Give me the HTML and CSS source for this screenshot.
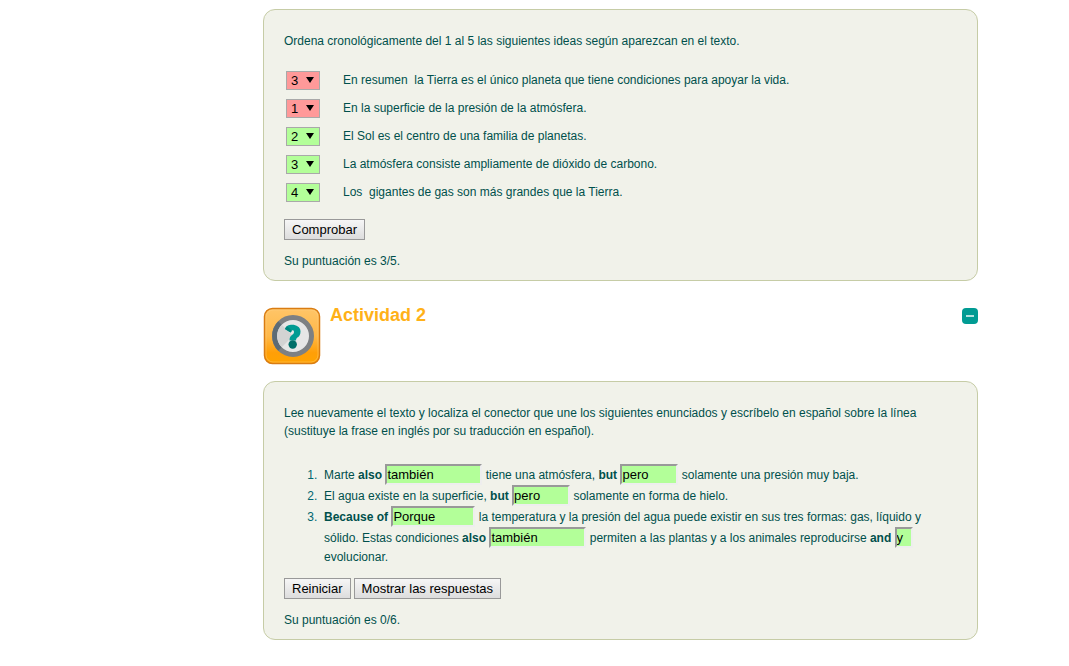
FILE: index.html
```html
<!DOCTYPE html>
<html lang="es">

<head>
    <meta charset="UTF-8">
    <meta name="viewport" content="width=device-width, initial-scale=1.0">
    <title>Actividades</title>

    <link rel="stylesheet" href="styles.css">
</head>

<body>

    <main>

        <form class="caja">
            <p>Ordena cronológicamente del 1 al 5 las siguientes ideas según aparezcan en el texto.</p>

            <ul class="ideas">
                <li>
                    <span class="orden mal">
                        <select id="idea1"><option>1</option><option>2</option><option selected>3</option><option>4</option><option>5</option></select>
                    </span>
                    <label for="idea1">En resumen&nbsp; la Tierra es el único planeta que tiene condiciones para apoyar la vida.</label>
                </li>
                <li>
                    <span class="orden mal">
                        <select id="idea2"><option selected>1</option><option>2</option><option>3</option><option>4</option><option>5</option></select>
                    </span>
                    <label for="idea2">En la superficie de la presión de la atmósfera.</label>
                </li>
                <li>
                    <span class="orden bien">
                        <select id="idea3"><option>1</option><option selected>2</option><option>3</option><option>4</option><option>5</option></select>
                    </span>
                    <label for="idea3">El Sol es el centro de una familia de planetas.</label>
                </li>
                <li>
                    <span class="orden bien">
                        <select id="idea4"><option>1</option><option>2</option><option selected>3</option><option>4</option><option>5</option></select>
                    </span>
                    <label for="idea4">La atmósfera consiste ampliamente de dióxido de carbono.</label>
                </li>
                <li>
                    <span class="orden bien">
                        <select id="idea5"><option>1</option><option>2</option><option>3</option><option selected>4</option><option>5</option></select>
                    </span>
                    <label for="idea5">Los&nbsp; gigantes de gas son más grandes que la Tierra.</label>
                </li>
            </ul>

            <div class="botones">
                <button type="button">Comprobar</button>
            </div>
            <p class="puntos">Su puntuación es 3/5.</p>
        </form>

        <header class="titulo">
            <svg class="icono" viewBox="0 0 58 58" aria-hidden="true">
                <defs>
                    <linearGradient id="naranja" x1="0" y1="0" x2="0" y2="1">
                        <stop offset="0" stop-color="#ffc568" />
                        <stop offset=".5" stop-color="#ffb848" />
                        <stop offset=".8" stop-color="#ff9f08" />
                        <stop offset="1" stop-color="#ffa300" />
                    </linearGradient>
                </defs>
                <rect x="1.5" y="1.5" width="55" height="55" rx="8" fill="url(#naranja)" stroke="#d97c12" stroke-width="1.5" />
                <rect x="3" y="3" width="52" height="52" rx="7" fill="none" stroke="#ffd48a" stroke-opacity=".4" />
                <circle cx="30" cy="29" r="18.5" fill="#e6e6e6" stroke="#7d8083" stroke-width="5" />
                <path d="M17 16a18.500 18.500 0 0 0 0 26" fill="none" stroke="#5d6b75" stroke-width="5" />
                <path d="M18.700 17.700a16 16 0 0 0 0 22.600L30 29z" fill="#d3d3d3" />
                <path d="M22 22C23 16 37.500 16 37.500 24.500C37.500 31 33 29.500 33 33.500H26.500C26.500 27 31 28.500 31 25C31 22.500 28 23 27.500 25.500Z" fill="#009b93" />
                <path d="M22 22l2-3 5 5-1.500 1.500z" fill="#00857e" />
                <circle cx="29.700" cy="37.500" r="4.200" fill="#006e68" />
            </svg>
            <h2>Actividad 2</h2>
            <button type="button" class="plegar" aria-label="Ocultar actividad"></button>
        </header>

        <form class="caja">
            <p>Lee nuevamente el texto y localiza el conector que une los siguientes enunciados y escríbelo en español sobre la línea (sustituye la frase en inglés por su traducción en español).</p>

            <ol class="frases">
                <li>Marte <b>also</b> <input type="text" class="largo" value="también" aria-label="also">&nbsp;tiene una atmósfera, <b>but</b> <input type="text" class="corto" value="pero" aria-label="but">&nbsp;solamente una presión muy baja.</li>
                <li>El agua existe en la superficie, <b>but</b> <input type="text" class="corto" value="pero" aria-label="but">&nbsp;solamente en forma de hielo.</li>
                <li><b>Because of</b> <input type="text" class="medio" value="Porque" aria-label="Because of">&nbsp;la temperatura y la presión del agua puede existir en sus tres formas: gas, líquido y sólido. Estas condiciones <b>also</b> <input type="text" class="largo" value="también" aria-label="also">&nbsp;permiten a las plantas y a los animales reproducirse <b>and</b> <input type="text" class="mini" value="y" aria-label="and"> evolucionar.</li>
            </ol>

            <div class="botones">
                <button type="button">Reiniciar</button>
                <button type="button">Mostrar las respuestas</button>
            </div>
            <p class="puntos">Su puntuación es 0/6.</p>
        </form>

    </main>

</body>

</html>
```

FILE: styles.css
```css
* {
    margin: 0;
    padding: 0;
    box-sizing: border-box;
}

body {
    padding: 9px 91px 24px 263px;
    background-color: white;
    color: #00504c;
    font-family: "Liberation Sans", Arial, sans-serif;
    font-size: 12px;
    line-height: 18px;
}

.caja {
    padding: 22px 20px 10px;
    background-color: #f1f2ea;
    border: 1px solid #c6cca6;
    border-radius: 12px;
}

.ideas {
    margin: 16px 0 13px 2px;
    list-style: none;
}

.ideas li {
    display: flex;
    align-items: center;
    gap: 23px;
    height: 28px;
}

.orden {
    position: relative;
    display: flex;
}

/* flecha del desplegable */
.orden::after {
    content: "";
    position: absolute;
    top: 6px;
    right: 6px;
    border: 4px solid transparent;
    border-top: 6px solid black;
    border-bottom: none;
    pointer-events: none;
}

.orden select {
    appearance: none;
    width: 34px;
    height: 19px;
    padding-left: 4px;
    border: 1px solid #a9a9a9;
    color: black;
    font-family: inherit;
    font-size: 13px;
}

.mal select {
    background-color: #ff9999;
}

.bien select {
    background-color: #b3ff99;
}

.botones {
    display: flex;
    gap: 3px;
}

.botones button {
    height: 21px;
    padding: 0 7px;
    border: 1px solid #999;
    background: linear-gradient(#f6f6f6, #dddddd);
    color: black;
    font-family: inherit;
    font-size: 13px;
}

.puntos {
    margin-top: 12px;
}

.titulo {
    display: flex;
    align-items: flex-start;
    gap: 9px;
    margin: 26px 0 16px;
}

.icono {
    width: 58px;
    height: 58px;
}

h2 {
    flex: 1;
    color: #ffb118;
    font-size: 18px;
    line-height: 16px;
}

.plegar {
    display: flex;
    align-items: center;
    justify-content: center;
    width: 16px;
    height: 16px;
    margin-top: 1px;
    border: none;
    border-radius: 4px;
    background-color: #009b93;
}

.plegar::before {
    content: "";
    width: 8px;
    height: 2px;
    background-color: #b3e1de;
}

.frases {
    margin: 24px 0 12px;
    padding-left: 40px;
}

.frases li::marker {
    content: counter(list-item) ".\00a0\00a0";
    color: #006670;
}

.frases input {
    height: 21px;
    border: 2px solid;
    border-color: #999 #eee #eee #999;
    background-color: #b3ff99;
    color: black;
    font-family: inherit;
    font-size: 13px;
    vertical-align: baseline;
}

.largo {
    width: 97px;
}

.medio {
    width: 84px;
}

.corto {
    width: 58px;
}

.mini {
    width: 18px;
}
```
